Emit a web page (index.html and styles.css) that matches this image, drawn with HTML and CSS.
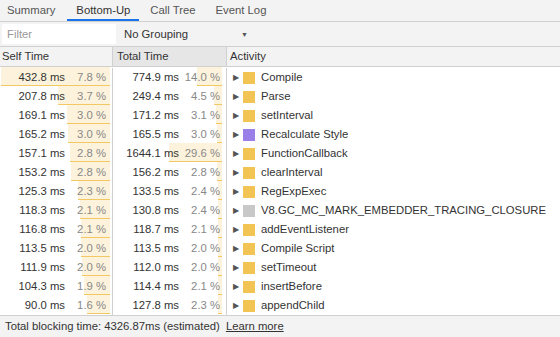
FILE: index.html
```html
<!DOCTYPE html>
<html>
<head>
<meta charset="utf-8">
<link rel="stylesheet" href="styles.css">
</head>
<body>
<div class="panel">
  <div class="tabs">
    <div class="tab first">Summary</div>
    <div class="tab active">Bottom-Up</div>
    <div class="tab">Call Tree</div>
    <div class="tab">Event Log</div>
  </div>
  <div class="toolbar">
    <div class="filter">Filter</div>
    <div class="grouping"><span>No Grouping</span><span class="arrow">▼</span></div>
  </div>
  <div class="grid">
    <div class="hcell">Self Time</div>
    <div class="hcell sel">Total Time</div>
    <div class="hcell last">Activity</div>
  </div>
  <div class="body" id="body"></div>
  <div class="footer">Total blocking time: 4326.87ms (estimated) <a class="learn">Learn more</a></div>
</div>
<script src="app.js"></script>
</body>
</html>
```
FILE: app.js
```js
const rows = [
  ["432.8","7.8","774.9","14.0","y","Compile"],
  ["207.8","3.7","249.4","4.5","y","Parse"],
  ["169.1","3.0","171.2","3.1","y","setInterval"],
  ["165.2","3.0","165.5","3.0","p","Recalculate Style"],
  ["157.1","2.8","1644.1","29.6","y","FunctionCallback"],
  ["153.2","2.8","156.2","2.8","y","clearInterval"],
  ["125.3","2.3","133.5","2.4","y","RegExpExec"],
  ["118.3","2.1","130.8","2.4","g","V8.GC_MC_MARK_EMBEDDER_TRACING_CLOSURE"],
  ["116.8","2.1","118.7","2.1","y","addEventListener"],
  ["113.5","2.0","113.5","2.0","y","Compile Script"],
  ["111.9","2.0","112.0","2.0","y","setTimeout"],
  ["104.3","1.9","114.4","2.1","y","insertBefore"],
  ["90.0","1.6","127.8","2.3","y","appendChild"]
];
const maxSelf = 432.8;
const body = document.getElementById("body");
for (const r of rows) {
  const row = document.createElement("div");
  row.className = "grid row";
  const selfW = (parseFloat(r[0]) / maxSelf * 109).toFixed(1);
  const totW = (parseFloat(r[3]) * 1.8).toFixed(1);
  row.innerHTML =
    `<div class="cell num"><div class="bar" style="width:${selfW}px"></div><span class="ms">${r[0]} ms</span><span class="pct">${r[1]} %</span></div>` +
    `<div class="cell num tot"><div class="bar" style="width:${totW}px"></div><span class="ms">${r[2]} ms</span><span class="pct">${r[3]} %</span></div>` +
    `<div class="cell act"><span class="tri">▶</span><span class="sw ${r[4]}"></span><span>${r[5]}</span></div>`;
  body.appendChild(row);
}
```
FILE: styles.css
```css
html, body { margin: 0; padding: 0; }
body {
  font-family: "Liberation Sans", Arial, sans-serif;
  font-size: 11.3px;
  color: #333;
  background: #fff;
  width: 560px;
  height: 337px;
  overflow: hidden;
}
.panel { display: flex; flex-direction: column; height: 337px; }
.tabs {
  display: flex;
  gap: 2px;
  height: 22px;
  background: #f3f3f3;
  border-bottom: 1px solid #d0d0d0;
  box-sizing: border-box;
}
.tab {
  padding: 0 9px;
  line-height: 20px;
  color: #555;
}
.tab.first { padding-left: 7px; }
.tab.active {
  color: #333;
  border-bottom: 2px solid #1a73e8;
  margin-left: 1px;
}
.toolbar {
  display: flex;
  align-items: center;
  height: 26px;
  background: #f3f3f3;
  border-bottom: 1px solid #d0d0d0;
  box-sizing: border-box;
}
.filter {
  width: 114px;
  height: 20px;
  margin-left: 2px;
  background: #fff;
  color: #999;
  line-height: 20px;
  padding-left: 5px;
  box-sizing: border-box;
}
.grouping {
  display: flex;
  align-items: center;
  margin-left: 8px;
  width: 124px;
  justify-content: space-between;
}
.arrow { font-size: 7px; color: #555; }
.grid {
  display: grid;
  grid-template-columns: 113px 114px 1fr;
}
.hcell {
  height: 20px;
  line-height: 19px;
  background: #f3f3f3;
  border-right: 1px solid #d0d0d0;
  border-bottom: 1px solid #d0d0d0;
  box-sizing: border-box;
  padding-left: 2px;
}
.hcell.sel { background: #e6e6e6; padding-left: 4px; }
.hcell.last { border-right: none; padding-left: 3px; }
.body { flex: 1; background: #fff; padding-top: 1px; }
.row { height: 19px; }
.cell {
  height: 19px;
  line-height: 19px;
  box-sizing: border-box;
  border-right: 1px solid #d0d0d0;
  position: relative;
  white-space: nowrap;
}
.num {
  display: flex;
  justify-content: flex-end;
  padding-right: 6px;
}
.bar {
  position: absolute;
  right: 2px;
  top: -1px;
  bottom: 1px;
  background: #fdf3dc;
  border-bottom: 1.5px solid #f2c862;
}
.tot .bar { right: 4px; }
.ms, .pct { position: relative; }
.pct { width: 41px; text-align: right; color: #888; }
.act {
  border-right: none;
  display: flex;
  align-items: center;
  padding-left: 6px;
}
.tri { font-size: 8px; color: #555; width: 10px; }
.sw { width: 12px; height: 12px; margin: 0 6px 0 0; }
.sw.y { background: #f1c453; }
.sw.p { background: #9b7fe8; }
.sw.g { background: #c8c8c8; }
.footer {
  height: 21px;
  border-top: 1px solid #d0d0d0;
  background: #f3f3f3;
  line-height: 21px;
  padding-left: 5px;
  color: #333;
}
.learn { text-decoration: underline; color: #333; margin-left: 3px; }
```
